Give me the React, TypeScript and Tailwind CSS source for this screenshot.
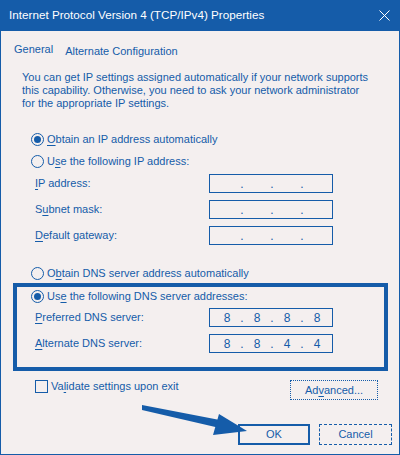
import React from "react";

const BLUE = "#155ca9";

function Radio({ checked }: { checked?: boolean }) {
  return (
    <span className="flex h-[13px] w-[13px] shrink-0 items-center justify-center rounded-full border border-[#155ca9]">
      {checked && <span className="h-[7px] w-[7px] rounded-full bg-[#155ca9]"></span>}
    </span>
  );
}

function IpField({ value }: { value?: string[] }) {
  const parts = value ?? ["", "", "", ""];
  return (
    <div className="flex h-[19px] w-[124px] shrink-0 items-center border border-[#155ca9] pl-[4px] text-[12px] leading-none">
      {parts.map((p, i) => (
        <React.Fragment key={i}>
          <span className="w-[26px] text-center">{p}</span>
          {i < 3 && <span className="w-[4px] text-center">.</span>}
        </React.Fragment>
      ))}
    </div>
  );
}

function FieldRow({ label, k, rest, value, className }: { label: string; k: string; rest: string; value?: string[]; className?: string }) {
  return (
    <div className={"flex h-[19px] items-center " + (className ?? "")}>
      <span className="w-[174px] shrink-0">
        {label}
        <u className="underline-offset-2">{k}</u>
        {rest}
      </span>
      <IpField value={value} />
    </div>
  );
}

export default function App() {
  return (
    <div className="flex h-[455px] w-[400px] flex-col overflow-hidden whitespace-nowrap bg-[#f4efef] font-['Liberation_Sans',Arial,sans-serif] text-[11px] text-[#155ca9]">
      {/* title bar */}
      <div className="flex h-[31px] shrink-0 items-center justify-between bg-[#155ca9] pl-[9px] pr-[10px] text-[11.7px] text-white">
        <span className="pb-[1px]">Internet Protocol Version 4 (TCP/IPv4) Properties</span>
        <svg width="11" height="11" viewBox="0 0 11 11" className="mb-[1px]">
          <path d="M0.5 0.5 L10.5 10.5 M10.5 0.5 L0.5 10.5" stroke="white" strokeWidth="1" fill="none" />
        </svg>
      </div>

      <div className="relative flex flex-1 flex-col border-x border-b border-[#155ca9]">
        {/* tabs */}
        <div className="flex h-[40px] shrink-0 items-start pl-[13px]">
          <span className="pt-[10px]">General</span>
          <span className="pl-[12px] pt-[12px]">Alternate Configuration</span>
        </div>

        <p className="pl-[21px] leading-[13px]">
          You can get IP settings assigned automatically if your network supports
          <br />
          this capability. Otherwise, you need to ask your network administrator
          <br />
          for the appropriate IP settings.
        </p>

        <div className="mt-[19px] flex h-[20px] items-center gap-[3px] pl-[30px]">
          <Radio checked />
          <span>
            <u className="underline-offset-2">O</u>btain an IP address automatically
          </span>
        </div>
        <div className="mt-[2px] flex h-[20px] items-center gap-[3px] pl-[30px]">
          <Radio />
          <span>
            U<u className="underline-offset-2">s</u>e the following IP address:
          </span>
        </div>

        <div className="flex flex-col pl-[34px]">
          <FieldRow className="mt-[3px]" label="" k="I" rest="P address:" />
          <FieldRow className="mt-[7px]" label="S" k="u" rest="bnet mask:" />
          <FieldRow className="mt-[7px]" label="" k="D" rest="efault gateway:" />
        </div>

        <div className="mt-[18px] flex h-[20px] items-center gap-[3px] pl-[30px]">
          <Radio />
          <span>
            O<u className="underline-offset-2">b</u>tain DNS server address automatically
          </span>
        </div>

        {/* highlighted DNS block */}
        <div className="ml-[12px] flex w-[375px] flex-col border-4 border-[#155ca9] pb-[14px]">
          <div className="flex h-[18px] items-center gap-[3px] pl-[14px]">
            <Radio checked />
            <span>
              Us<u className="underline-offset-2">e</u> the following DNS server addresses:
            </span>
          </div>
          <div className="flex flex-col pl-[18px]">
            <FieldRow className="mt-[3px]" label="" k="P" rest="referred DNS server:" value={["8", "8", "8", "8"]} />
            <FieldRow className="mt-[7px]" label="" k="A" rest="lternate DNS server:" value={["8", "8", "4", "4"]} />
          </div>
        </div>

        <div className="mt-[9px] flex items-start pl-[34px] pr-[21px]">
          <div className="flex items-center gap-[3px]">
            <span className="h-[13px] w-[13px] border border-[#155ca9]"></span>
            <span className="leading-[13px]">
              Va<u className="underline-offset-2">l</u>idate settings upon exit
            </span>
          </div>
          <div className="ml-auto flex h-[20px] w-[88px] items-center justify-center border border-dotted border-[#155ca9]">
            Ad<u className="underline-offset-2">v</u>anced...
          </div>
        </div>

        <div className="mt-[24px] flex justify-end gap-[9px] pr-[7px]">
          <div className="flex h-[21px] w-[72px] items-center justify-center border-2 border-[#155ca9]">OK</div>
          <div className="flex h-[21px] w-[73px] items-center justify-center border border-dashed border-[#155ca9]">Cancel</div>
        </div>

        {/* annotation arrow */}
        <svg className="pointer-events-none absolute left-[-1px] top-[-31px]" width="400" height="455" viewBox="0 0 400 455">
          <polygon points="142,405 142,410 224,429 225,421" fill={BLUE} />
          <polygon points="219,414 213,435 247,431" fill={BLUE} />
        </svg>
      </div>
    </div>
  );
}
